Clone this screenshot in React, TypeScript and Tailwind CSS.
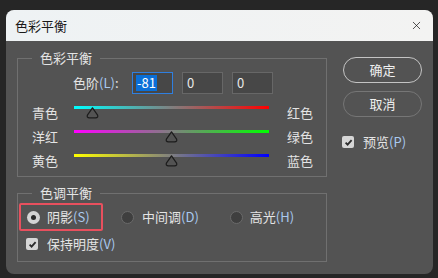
import { X } from 'lucide-react'

const font = { fontFamily: '"Noto Sans CJK SC", "Noto Sans", sans-serif' }

function Key({ k }: { k: string }) {
  return <span className="text-[#a9c9ef]">({k})</span>
}

function Thumb({ pos }: { pos: number }) {
  // pos: -100..100
  const left = ((pos + 100) / 200) * 195
  return (
    <svg
      className="absolute top-[1px]"
      style={{ left: left - 6.5 }}
      width="13"
      height="12"
      viewBox="0 0 13 12"
    >
      <path
        d="M6.5 0.8 L11.6 8.2 Q12.4 10.8 9.6 10.8 L3.4 10.8 Q0.6 10.8 1.4 8.2 Z"
        fill="#535353"
        stroke="#1c1c1c"
        strokeWidth="1.2"
        strokeLinejoin="round"
      />
    </svg>
  )
}

function SliderRow({
  left,
  right,
  gradient,
  pos,
}: {
  left: string
  right: string
  gradient: string
  pos: number
}) {
  return (
    <div className="flex h-[24px] items-start">
      <span className="w-[56px] pl-[14px] text-[13px] leading-[16px] whitespace-nowrap">{left}</span>
      <div className="relative mt-[1px] w-[195px]">
        <div className={`h-[3px] w-full ${gradient}`} />
        <Thumb pos={pos} />
      </div>
      <span className="ml-[18px] text-[13px] leading-[16px] whitespace-nowrap">{right}</span>
    </div>
  )
}

function Radio({ checked }: { checked?: boolean }) {
  return checked ? (
    <span className="flex h-[13px] w-[13px] items-center justify-center rounded-full bg-[#d4d4d4]">
      <span className="h-[5px] w-[5px] rounded-full bg-[#2a2a2a]" />
    </span>
  ) : (
    <span className="h-[13px] w-[13px] rounded-full border border-[#6a6a6a] bg-[#3f3f3f]" />
  )
}

function Check() {
  return (
    <span className="flex h-[12px] w-[12px] items-center justify-center rounded-[2px] bg-[#d6d6d6]">
      <svg width="9" height="9" viewBox="0 0 9 9">
        <path d="M1.6 4.6 L3.6 6.6 L7.6 2.2" fill="none" stroke="#2b2b2b" strokeWidth="1.8" />
      </svg>
    </span>
  )
}

function NumBox({ value, active }: { value: string; active?: boolean }) {
  return (
    <div
      className={`flex h-[22px] w-[41px] items-center border pl-[3px] text-[13px] ${
        active ? 'border-[#2f7fe0] bg-[#474747]' : 'border-[#676767] bg-[#474747]'
      }`}
    >
      {active ? (
        <span className="bg-[#0a6fd8] px-[1px] leading-[16px] text-white">{value}</span>
      ) : (
        <span className="px-[1px] leading-[16px] text-[#eaeaea]">{value}</span>
      )}
    </div>
  )
}

export default function App() {
  return (
    <div className="h-[278px] w-[438px] bg-[#262626] pt-[10px] pl-[6px]" style={font}>
      <div className="h-[264px] w-[427px] overflow-hidden rounded-[8px] bg-[#535353] text-[#e4e4e4]">
        {/* title bar */}
        <div className="flex h-[31px] items-center justify-between bg-[linear-gradient(to_right,#eef2f4,#f3f3f2)] pr-[10px] pl-[9px] text-[#1a1a1a]">
          <span className="text-[13px]">色彩平衡</span>
          <X size={13} strokeWidth={1.3} color="#111" />
        </div>

        <div className="flex">
          {/* left column */}
          <div className="pt-[17px] pl-[11px]">
            <div className="relative h-[119px] w-[310px] border border-[#707070]">
              <span className="absolute -top-[9px] left-[14px] bg-[#535353] px-[8px] text-[13px] leading-[16px]">
                色彩平衡
              </span>
              <div className="mt-[13px] flex items-center">
                <span className="ml-[55px] w-[47px] text-[13px] leading-[16px] whitespace-nowrap">
                  色阶<Key k="L" />:
                </span>
                <div className="ml-[12px] flex gap-[9px]">
                  <NumBox value="-81" active />
                  <NumBox value="0" />
                  <NumBox value="0" />
                </div>
              </div>
              <div className="mt-[11px]">
                <SliderRow left="青色" right="红色" gradient="bg-[linear-gradient(to_right,#00ffff,#ff0000)]" pos={-81} />
                <SliderRow left="洋红" right="绿色" gradient="bg-[linear-gradient(to_right,#ff00ff,#00ff00)]" pos={0} />
                <SliderRow left="黄色" right="蓝色" gradient="bg-[linear-gradient(to_right,#ffff00,#0000ff)]" pos={0} />
              </div>
            </div>

            <div className="relative mt-[16px] h-[69px] w-[310px] border border-[#707070]">
              <span className="absolute -top-[9px] left-[14px] bg-[#535353] px-[8px] text-[13px] leading-[16px]">
                色调平衡
              </span>
              <div className="mt-[9px] flex items-center">
                <div className="ml-[1px] flex h-[28px] w-[84px] items-center gap-[7px] rounded-[2px] border-2 border-[#e8505e] pl-[6px]">
                  <Radio checked />
                  <span className="text-[13px] leading-[16px]">
                    阴影<Key k="S" />
                  </span>
                </div>
                <div className="ml-[18px] flex items-center gap-[8px]">
                  <Radio />
                  <span className="text-[13px] leading-[16px]">
                    中间调<Key k="D" />
                  </span>
                </div>
                <div className="ml-[31px] flex items-center gap-[7px]">
                  <Radio />
                  <span className="text-[13px] leading-[16px]">
                    高光<Key k="H" />
                  </span>
                </div>
              </div>
              <div className="mt-[5px] ml-[8px] flex items-center gap-[9px]">
                <Check />
                <span className="text-[13px] leading-[16px]">
                  保持明度<Key k="V" />
                </span>
              </div>
            </div>
          </div>

          {/* right column */}
          <div className="ml-[16px] flex flex-col pt-[16px]">
            <button className="h-[26px] w-[79px] rounded-full border-[1.5px] border-[#c4c4c4] text-[13px] text-[#f0f0f0]">
              确定
            </button>
            <button className="mt-[8px] h-[26px] w-[79px] rounded-full border border-[#767676] text-[13px] text-[#f0f0f0]">
              取消
            </button>
            <div className="mt-[17px] ml-[-1px] flex items-center gap-[9px]">
              <Check />
              <span className="text-[13px] leading-[16px]">
                预览<Key k="P" />
              </span>
            </div>
          </div>
        </div>
      </div>
    </div>
  )
}
